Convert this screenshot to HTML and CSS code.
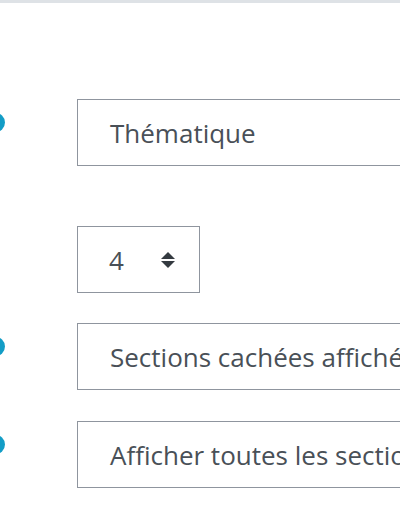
FILE: index.html
```html
<!DOCTYPE html>
<html lang="fr">
<head>
    <meta charset="UTF-8">
    <meta name="viewport" content="width=device-width, initial-scale=1.0">
    <title>Format du cours</title>
    <link rel="stylesheet" href="styles.css">
</head>
<body>
    <div class="topbar"></div>
    <form class="settings">
        <div class="row row-format">
            <div class="label"><span class="help"></span></div>
            <div class="field select wide">Thématique</div>
        </div>
        <div class="row row-number">
            <div class="label"></div>
            <div class="field select small">
                <span>4</span>
                <svg class="spin" width="16" height="18" viewBox="0 0 16 18">
                    <path d="M8 1 L15 8 L1 8 Z" fill="#343a40"/>
                    <path d="M1 10 L15 10 L8 17 Z" fill="#343a40"/>
                </svg>
            </div>
        </div>
        <div class="row">
            <div class="label"><span class="help"></span></div>
            <div class="field select wide">Sections cachées affichées en mode replié</div>
        </div>
        <div class="row">
            <div class="label"><span class="help"></span></div>
            <div class="field select wide">Afficher toutes les sections sur une seule page</div>
        </div>
    </form>
</body>
</html>
```

FILE: styles.css
```css
body {
    margin: 0;
    background: #fff;
    font-family: "Open Sans", "Noto Sans", sans-serif;
    color: #495057;
    overflow: hidden;
}
.topbar {
    height: 3px;
    background-color: #dee2e6;
}
.settings {
    padding-top: 96px;
}
.row {
    display: flex;
    align-items: flex-start;
    margin-bottom: 31px;
}
.row-format {
    margin-bottom: 60px;
}
.row-number {
    margin-bottom: 30px;
}
.label {
    width: 77px;
    flex-shrink: 0;
}
.help {
    display: block;
    width: 19px;
    height: 19px;
    margin-left: -14px;
    margin-top: 14px;
    border-radius: 50%;
    background-color: #139dc6;
}
.field {
    box-sizing: border-box;
    height: 67px;
    border: 1px solid #8f959e;
    background: #fff;
    display: flex;
    align-items: center;
    font-size: 26px;
    white-space: nowrap;
    flex-shrink: 0;
}
.wide {
    width: 700px;
    padding-left: 32px;
}
.small {
    width: 123px;
    padding-left: 31px;
    justify-content: space-between;
    padding-right: 23px;
}
.spin {
    display: block;
}
```
